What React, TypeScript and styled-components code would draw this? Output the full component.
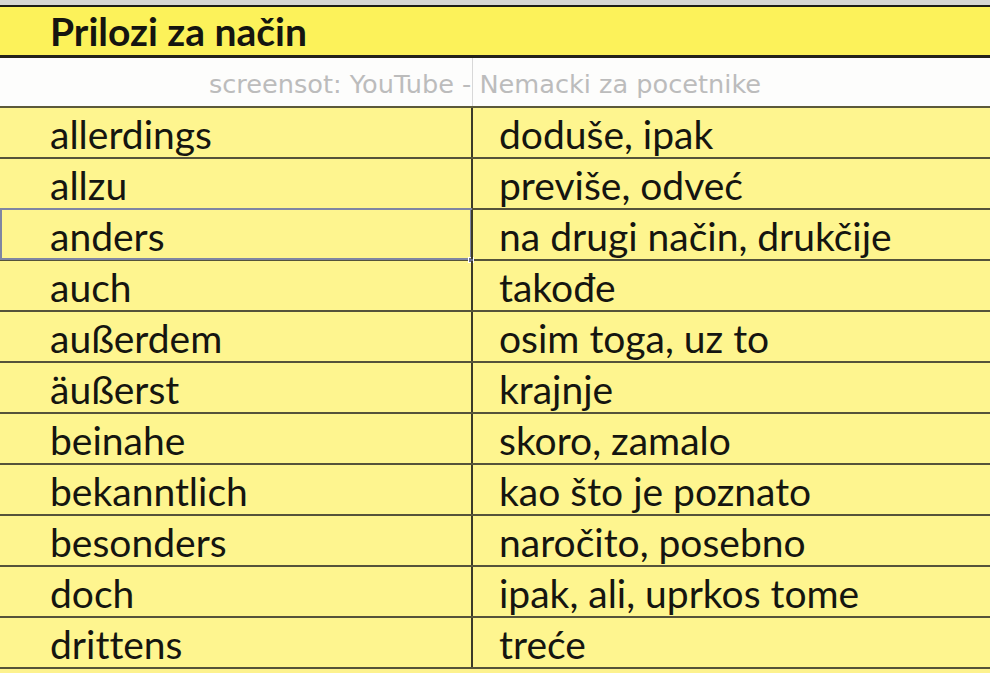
import styled, { createGlobalStyle } from "styled-components"

const Global = createGlobalStyle`
    html, body {
        margin: 0;
        padding: 0;
        background: #fdf28e;
    }
    body {
        width: 990px;
        height: 673px;
        overflow: hidden;
    }
`

const rows: [string, string][] = [
    ['allerdings', 'doduše, ipak'],
    ['allzu', 'previše, odveć'],
    ['anders', 'na drugi način, drukčije'],
    ['auch', 'takođe'],
    ['außerdem', 'osim toga, uz to'],
    ['äußerst', 'krajnje'],
    ['beinahe', 'skoro, zamalo'],
    ['bekanntlich', 'kao što je poznato'],
    ['besonders', 'naročito, posebno'],
    ['doch', 'ipak, ali, uprkos tome'],
    ['drittens', 'treće'],
]

const Sheet = styled.div`
    width: 990px;
    border-top: 5px solid #d6d6d2;
    font-family: Lato, "Open Sans", sans-serif;
    font-variant-ligatures: none;
    color: #151510;
`
const Title = styled.div`
    height: 48px;
    background: #fcf25a;
    border-top: 2px solid #1e1e16;
    border-bottom: 3px solid #23231a;
    display: flex;
    align-items: center;
    padding-left: 50px;
    font-size: 39px;
    font-weight: 700;
`
const Watermark = styled.div`
    height: 50px;
    background: #fdfdfc;
    border-bottom: 2px solid #5c5a3a;
    display: flex;
    align-items: center;
    justify-content: center;
    padding-top: 4px;
    box-sizing: border-box;
    font-family: "DejaVu Sans", sans-serif;
    font-size: 25.6px;
    color: #bcbcbc;
    position: relative;
    &::before {
        content: '';
        position: absolute;
        left: 472px;
        top: 0;
        bottom: 0;
        width: 1px;
        background: #d8d8d8;
    }
    span {
        position: relative;
        margin-left: -20px;
    }
`
const Row = styled.div`
    display: grid;
    grid-template-columns: 471px 1fr;
    height: 49px;
    background: #fef58f;
    border-bottom: 2px solid #55533a;
`
const Cell = styled.div<{ $right?: boolean; $active?: boolean }>`
    display: flex;
    align-items: center;
    padding-top: 3px;
    padding-left: ${p => p.$right ? '26px' : '50px'};
    font-size: 39px;
    border-left: ${p => p.$right ? '2px solid #3c3a28' : 'none'};
    position: relative;
    ${p => p.$active && `
        &::before {
            content: '';
            position: absolute;
            left: 0;
            right: -1px;
            top: -2px;
            bottom: -1px;
            border: 2px solid #7f86a2;
        }
        &::after {
            content: '';
            position: absolute;
            right: -3px;
            bottom: -4px;
            width: 4px;
            height: 4px;
            background: #6e7390;
            border: 1px solid #fff;
        }
    `}
`

export default function App() {
    return <>
        <Global />
        <Sheet>
            <Title>Prilozi za način</Title>
            <Watermark><span>screensot: YouTube - Nemacki za pocetnike</span></Watermark>
            {rows.map(([de, sr], i) => <Row key={i}>
                <Cell $active={de === 'anders'}>{de}</Cell>
                <Cell $right>{sr}</Cell>
            </Row>)}
        </Sheet>
    </>
}
